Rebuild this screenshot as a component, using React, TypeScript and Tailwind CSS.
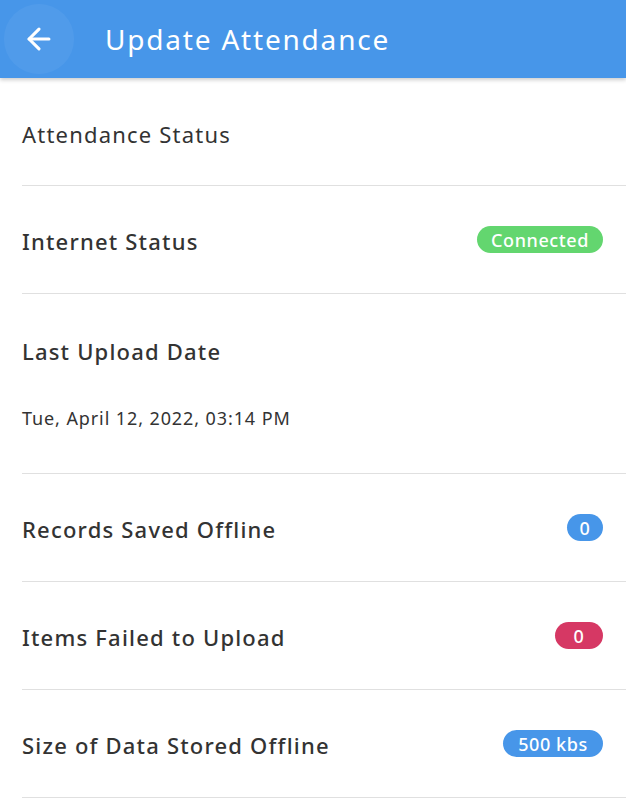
import { ArrowLeft } from 'lucide-react'

type Row = {
  label: string
  badge: string
  badgeClass: string
}

const rows: Row[] = [
  { label: 'Records Saved Offline', badge: '0', badgeClass: 'bg-[#4796e9] w-[36px]' },
  { label: 'Items Failed to Upload', badge: '0', badgeClass: 'bg-[#d63864] w-[48px]' },
  { label: 'Size of Data Stored Offline', badge: '500 kbs', badgeClass: 'bg-[#4796e9] w-[100px]' },
]

const Badge = ({ text, className }: { text: string; className: string }) => (
  <span
    className={`${className} rounded-full h-[27px] flex items-center justify-center text-white text-[18px] font-medium leading-none tracking-[0.6px]`}
  >
    {text}
  </span>
)

export default function App() {
  return (
    <div className="w-[626px] h-[800px] bg-white overflow-hidden font-['Noto_Sans',sans-serif] text-[#333]">
      <header className="relative z-10 h-[78px] bg-[#4796e9] flex items-center shadow-[0_2px_4px_rgba(0,0,0,0.2)]">
        <button className="ml-[4px] size-[70px] rounded-full bg-white/5 flex items-center justify-center text-white">
          <ArrowLeft size={34} strokeWidth={2.2} />
        </button>
        <h1 className="ml-[31px] text-white text-[28px] tracking-[1.8px]">Update Attendance</h1>
      </header>

      <div className="pl-[22px]">
        <div className="h-[108px] border-b border-[#e0e0e0] flex items-center pt-[6px]">
          <span className="text-[22px] tracking-[1.2px]">Attendance Status</span>
        </div>

        <div className="h-[108px] border-b border-[#e0e0e0] flex items-center justify-between pr-[23px]">
          <span className="text-[22px] font-medium tracking-[1.2px] pt-[4px]">Internet Status</span>
          <Badge text="Connected" className="bg-[#63d66f] w-[126px]" />
        </div>

        <div className="h-[180px] border-b border-[#e0e0e0] flex flex-col">
          <span className="mt-[41px] text-[22px] font-medium tracking-[1.2px]">Last Upload Date</span>
          <span className="mt-[37px] text-[18px] tracking-[0.9px]">Tue, April 12, 2022, 03:14 PM</span>
        </div>

        {rows.map((r) => (
          <div
            key={r.label}
            className="h-[108px] border-b border-[#e0e0e0] flex items-center justify-between pr-[23px]"
          >
            <span className="text-[22px] font-medium tracking-[1.2px] pt-[4px]">{r.label}</span>
            <Badge text={r.badge} className={r.badgeClass} />
          </div>
        ))}
      </div>
    </div>
  )
}
